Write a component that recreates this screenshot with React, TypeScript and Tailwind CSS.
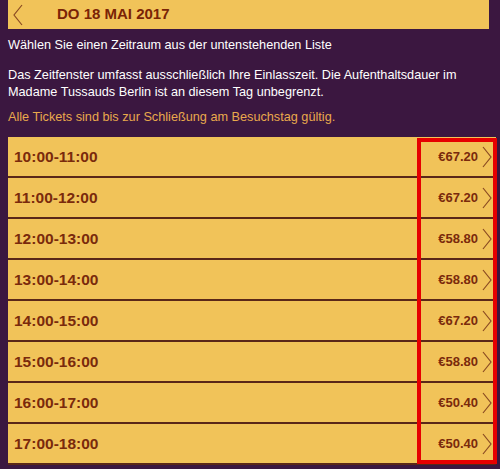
const slots = [
  { time: "10:00-11:00", price: "€67.20" },
  { time: "11:00-12:00", price: "€67.20" },
  { time: "12:00-13:00", price: "€58.80" },
  { time: "13:00-14:00", price: "€58.80" },
  { time: "14:00-15:00", price: "€67.20" },
  { time: "15:00-16:00", price: "€58.80" },
  { time: "16:00-17:00", price: "€50.40" },
  { time: "17:00-18:00", price: "€50.40" },
];

function Chevron({ dir }: { dir: "left" | "right" }) {
  return (
    <svg width="10" height="22" viewBox="0 0 10 22" fill="none">
      <path
        d={dir === "left" ? "M9 1 L1 11 L9 21" : "M1 1 L9 11 L1 21"}
        stroke="#8a4a22"
        strokeWidth="1.2"
      />
    </svg>
  );
}

export default function App() {
  return (
    <div className="relative w-[500px] h-[469px] overflow-hidden bg-[#3b1740] font-['Liberation_Sans',Arial,sans-serif]">
      {/* Datum */}
      <div className="ml-[8px] w-[481px] h-[29px] bg-[#f1c359] flex items-center">
        <div className="ml-[5px]">
          <Chevron dir="left" />
        </div>
        <span className="ml-[34px] text-[15px] font-bold text-[#7a2406]">
          DO 18 MAI 2017
        </span>
      </div>

      <p className="mt-[8px] pl-[8px] text-[12.7px] leading-[17px] text-white">
        Wählen Sie einen Zeitraum aus der untenstehenden Liste
      </p>
      <p className="mt-[13px] pl-[8px] pr-[18px] text-[12.7px] leading-[17px] text-white">
        Das Zeitfenster umfasst ausschließlich Ihre Einlasszeit. Die Aufenthaltsdauer im
        Madame Tussauds Berlin ist an diesem Tag unbegrenzt.
      </p>
      <p className="mt-[8px] pl-[8px] text-[12.7px] leading-[17px] text-[#e9a94c]">
        Alle Tickets sind bis zur Schließung am Besuchstag gültig.
      </p>

      {/* Zeitfenster */}
      <div className="mt-[11px] ml-[8px] w-[488px]">
        {slots.map((s) => (
          <div
            key={s.time}
            className="h-[41px] bg-[#f1c359] border-b-2 border-[#5a2718] flex items-center"
          >
            <span className="pl-[6px] text-[15.5px] font-bold text-[#7a2a0c] flex-1">
              {s.time}
            </span>
            <span className="text-[13px] font-bold text-[#7a2a0c]">{s.price}</span>
            <div className="ml-[4px] mr-[4px]">
              <Chevron dir="right" />
            </div>
          </div>
        ))}
      </div>

      {/* Markierung */}
      <div className="absolute left-[417px] top-[138px] w-[80px] h-[326px] border-4 border-[#e60000]" />
    </div>
  );
}
